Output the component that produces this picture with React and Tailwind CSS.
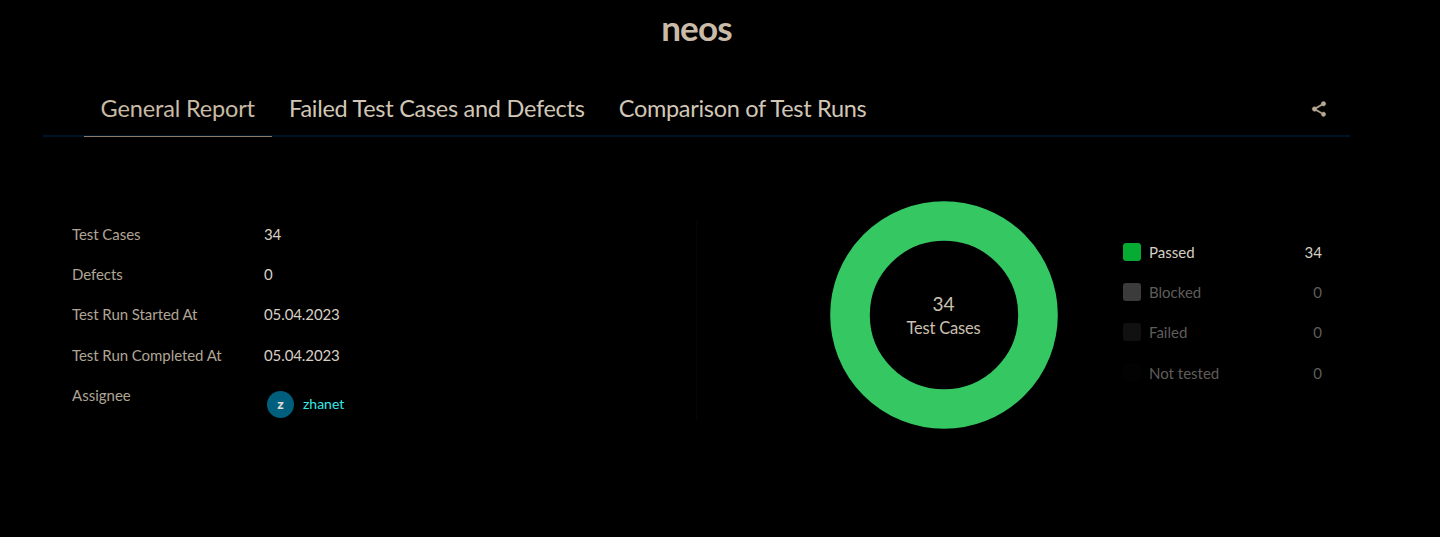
const tabs = [
  { label: "General Report", active: true, tracking: "tracking-[-0.15px]" },
  { label: "Failed Test Cases and Defects", tracking: "tracking-[-0.28px]" },
  { label: "Comparison of Test Runs", tracking: "tracking-[-0.3px]" },
];

const details = [
  ["Test Cases", "34"],
  ["Defects", "0"],
  ["Test Run Started At", "05.04.2023"],
  ["Test Run Completed At", "05.04.2023"],
];

const legend = [
  { label: "Passed", value: 34, swatch: "bg-[#05ab32]", text: "text-[#d8d0c4]" },
  { label: "Blocked", value: 0, swatch: "bg-[#3b3b3b]", text: "text-[#5f5d5a]" },
  { label: "Failed", value: 0, swatch: "bg-[#111111]", text: "text-[#5f5d5a]" },
  { label: "Not tested", value: 0, swatch: "bg-[#020202]", text: "text-[#5f5d5a]" },
];

function ShareIcon() {
  return (
    <svg width="18" height="18" viewBox="0 0 24 24" fill="#b9aa96" stroke="#b9aa96" strokeWidth="0.6">
      <path d="M18 16.08c-.76 0-1.44.3-1.96.77L8.91 12.7c.05-.23.09-.46.09-.7s-.04-.47-.09-.7l7.05-4.11c.54.5 1.25.81 2.04.81 1.66 0 3-1.34 3-3s-1.34-3-3-3-3 1.34-3 3c0 .24.04.47.09.7L8.04 9.81C7.5 9.31 6.79 9 6 9c-1.66 0-3 1.34-3 3s1.34 3 3 3c.79 0 1.5-.31 2.04-.81l7.12 4.16c-.05.21-.08.43-.08.65 0 1.61 1.31 2.92 2.92 2.92s2.92-1.31 2.92-2.92-1.31-2.92-2.92-2.92z" />
    </svg>
  );
}

function Tabs() {
  return (
    <nav className="flex h-[57px] items-stretch border-b-2 border-[#001324] pl-[40.5px]">
      {tabs.map((t) => (
        <button
          key={t.label}
          className={`-mb-[2px] flex h-[57px] shrink-0 items-center border-b px-[17.1px] text-[23.5px] leading-[30px] whitespace-nowrap ${t.tracking} ${
            t.active ? "border-[#8b7d67] text-[#c8baa4]" : "border-transparent text-[#d2c7b6]"
          }`}
        >
          {t.label}
        </button>
      ))}
      <button className="mr-[22px] ml-auto flex items-center pt-[2px]" aria-label="Share">
        <ShareIcon />
      </button>
    </nav>
  );
}

function Details() {
  return (
    <dl className="flex w-[654px] flex-col border-r border-[#040608] pl-[29px] text-[15px]">
      {details.map(([label, value]) => (
        <div key={label} className="flex h-[40.2px] items-start leading-[26px]">
          <dt className="w-[192px] tracking-[-0.06px] text-[#b0a595]">{label}</dt>
          <dd className="tracking-[-0.1px] text-[#d8d0c4]">{value}</dd>
        </div>
      ))}
      <div className="flex items-start leading-[26px]">
        <dt className="w-[195px] text-[#b0a595]">Assignee</dt>
        <dd className="flex items-center pt-[9px]">
          <span className="flex size-[27px] items-center justify-center rounded-full bg-[#005f7c] text-[14px] font-black text-[#e2ddd5]">
            z
          </span>
          <span className="ml-[9px] text-[14px] text-[#35e8e8]">zhanet</span>
        </dd>
      </div>
    </dl>
  );
}

function Donut() {
  return (
    <div className="grid size-[228px] place-items-center">
      <svg className="col-start-1 row-start-1" width="228" height="228" viewBox="0 0 228 228">
        <circle cx="114" cy="114" r="94" fill="none" stroke="#35c761" strokeWidth="39.6" />
      </svg>
      <div className="col-start-1 row-start-1 mr-px text-center text-[#cbc0b0]">
        <div className="text-[19px] leading-[25px]">34</div>
        <div className="text-[16.5px] leading-[24px] tracking-[-0.2px]">Test Cases</div>
      </div>
    </div>
  );
}

function Legend() {
  return (
    <ul className="w-[199px] text-[15px]">
      {legend.map((item) => (
        <li key={item.label} className={`flex h-[40.2px] items-start leading-[20px] ${item.text}`}>
          <span className={`mt-px mr-[8px] size-[18px] rounded-[3px] ${item.swatch}`} />
          <span>{item.label}</span>
          <span className="ml-auto">{item.value}</span>
        </li>
      ))}
    </ul>
  );
}

export default function App() {
  return (
    <div className="h-[537px] overflow-hidden bg-black font-['Lato',sans-serif]">
      <div className="ml-[43px] w-[1307px]">
        <h1 className="h-[80px] pt-[7px] text-center text-[35px] leading-[40px] font-bold tracking-[-0.8px] text-[#cabba8]">
          neos
        </h1>
        <Tabs />
        <main className="flex pt-[64px]">
          <div className="flex h-[228px] items-start pt-[20px]">
            <div className="flex h-[200px]">
              <Details />
            </div>
          </div>
          <div className="ml-[133px]">
            <Donut />
          </div>
          <div className="ml-[65px] pt-[41px]">
            <Legend />
          </div>
        </main>
      </div>
    </div>
  );
}
